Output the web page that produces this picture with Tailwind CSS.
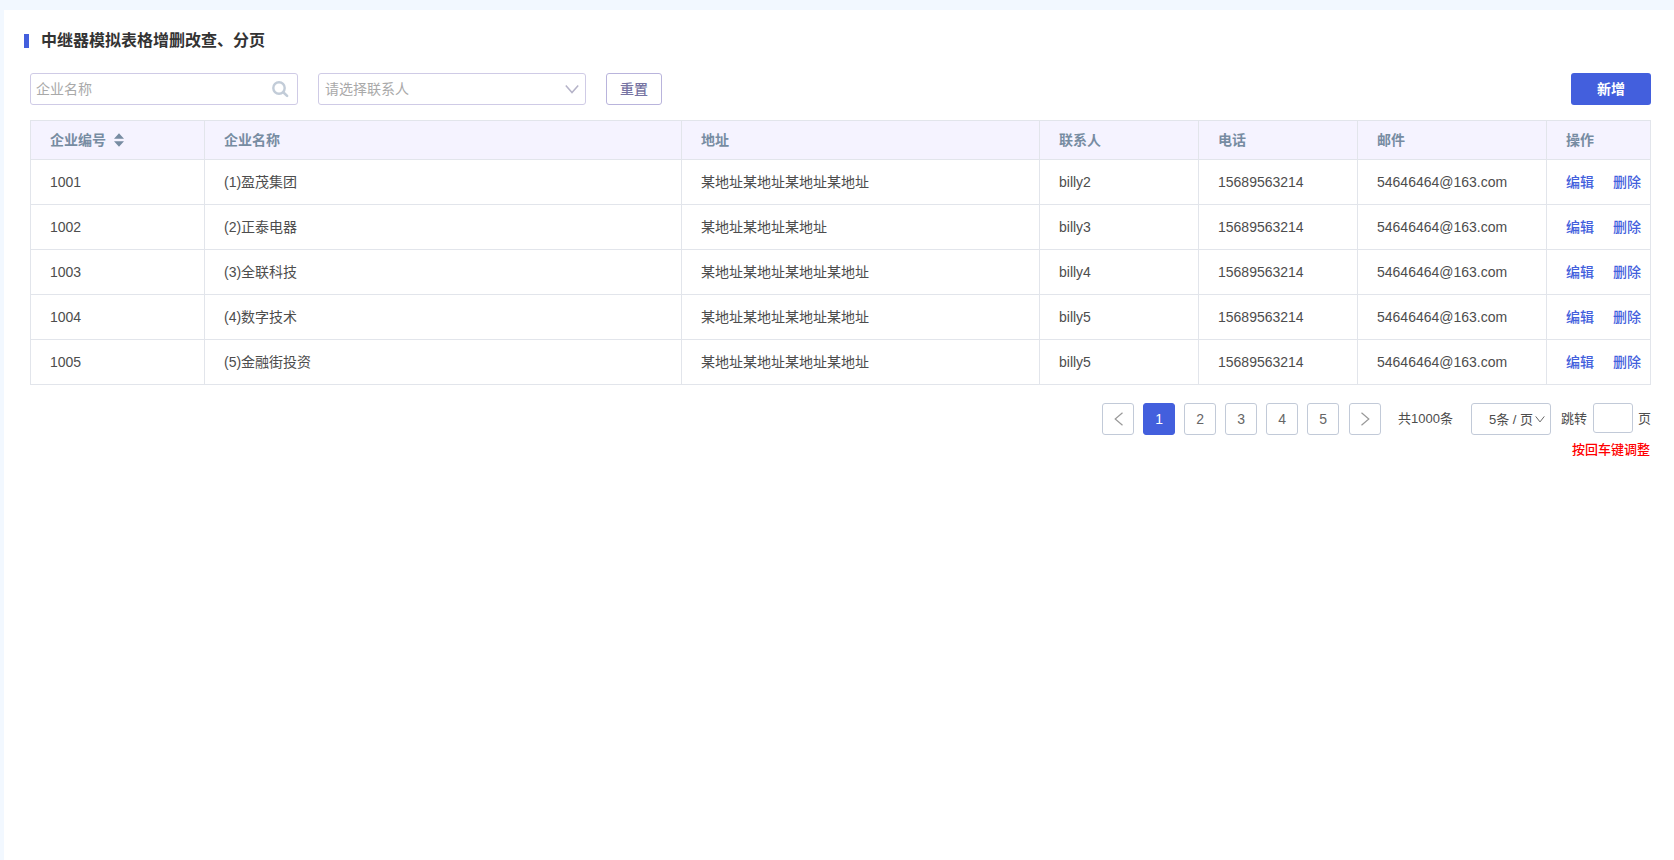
<!DOCTYPE html>
<html lang="zh-CN">
<head>
<meta charset="utf-8">
<meta name="viewport" content="width=device-width, initial-scale=1">
<title>中继器模拟表格增删改查、分页</title>
<script src="https://cdn.jsdelivr.net/npm/@tailwindcss/browser@4"></script>
</head>
<body class="flex min-h-screen flex-col bg-[#f2f8ff] pt-[10px] pl-1 font-['Liberation_Sans','Noto_Sans_CJK_SC',sans-serif] text-sm text-[#4d4d4d]">
<main class="flex-1 bg-white pt-[19px] pr-[23px] pl-[26px]">
  <header class="-ml-1.5 flex h-6 items-center gap-3">
    <span class="h-[14px] w-[5px] bg-[#435fdd]"></span>
    <h1 class="text-base leading-6 font-bold text-[#333]">中继器模拟表格增删改查、分页</h1>
  </header>

  <form class="mt-5 flex gap-5">
    <div class="relative w-[268px]">
      <input type="search" aria-label="企业名称" placeholder="企业名称" class="h-8 w-full rounded-[3px] border border-[#cfcbe6] bg-white pr-9 pl-[5px] text-sm outline-none placeholder:text-[#a9a9a9]">
      <svg class="pointer-events-none absolute top-2 right-[9px]" width="17" height="17" viewBox="0 0 17 17" fill="none" stroke="#c2ccd8" aria-hidden="true"><circle cx="7" cy="7" r="5.7" stroke-width="2.4"/><path d="M11.5 11.5l3.6 3.4" stroke-width="2.6" stroke-linecap="round"/></svg>
    </div>
    <div class="relative w-[268px]">
      <select aria-label="联系人" class="h-8 w-full appearance-none rounded-[3px] border border-[#cfcbe6] bg-white px-1.5 text-sm text-[#a9a9a9] outline-none">
        <option>请选择联系人</option>
      </select>
      <svg class="pointer-events-none absolute top-3 right-[7px]" width="14" height="9" viewBox="0 0 14 9" fill="none" stroke="#b5b3c8" stroke-width="1.5" aria-hidden="true"><path d="M.8.5L7 7.6 13.2.5"/></svg>
    </div>
    <button type="reset" class="h-8 w-14 rounded-[3px] border border-[#b9b4dc] bg-white font-medium text-[#7774a3]">重置</button>
    <button type="button" class="ml-auto h-8 w-20 rounded-[3px] bg-[#435fdd] font-bold text-white">新增</button>
  </form>

  <table class="mt-[15px] w-full table-fixed border-collapse text-left [&_td]:border [&_td]:border-[#e2e5eb] [&_td]:pl-[19px] [&_th]:border [&_th]:border-[#e2e5eb] [&_th]:pl-[19px]">
    <colgroup>
      <col class="w-[174px]"><col class="w-[477px]"><col><col class="w-[159px]"><col class="w-[159px]"><col class="w-[189px]"><col class="w-[104px]">
    </colgroup>
    <thead class="bg-[#f5f3ff] text-[#778ca2]">
      <tr class="h-[39px]">
        <th scope="col"><button type="button" class="flex items-center gap-2 font-bold">企业编号
          <svg width="10" height="14" viewBox="0 0 10 14" fill="currentColor" aria-hidden="true"><path d="M5 .2l5 5.6H0zM5 13.8L0 8.2h10z"/></svg></button></th>
        <th scope="col">企业名称</th><th scope="col">地址</th><th scope="col">联系人</th><th scope="col">电话</th><th scope="col">邮件</th><th scope="col">操作</th>
      </tr>
    </thead>
    <tbody>
      <tr class="h-[45px]"><td>1001</td><td>(1)盈茂集团</td><td>某地址某地址某地址某地址</td><td>billy2</td><td>15689563214</td><td>54646464@163.com</td><td><div class="flex gap-[19px] font-medium text-[#435fdd]"><a href="#">编辑</a><a href="#">删除</a></div></td></tr>
      <tr class="h-[45px]"><td>1002</td><td>(2)正泰电器</td><td>某地址某地址某地址</td><td>billy3</td><td>15689563214</td><td>54646464@163.com</td><td><div class="flex gap-[19px] font-medium text-[#435fdd]"><a href="#">编辑</a><a href="#">删除</a></div></td></tr>
      <tr class="h-[45px]"><td>1003</td><td>(3)全联科技</td><td>某地址某地址某地址某地址</td><td>billy4</td><td>15689563214</td><td>54646464@163.com</td><td><div class="flex gap-[19px] font-medium text-[#435fdd]"><a href="#">编辑</a><a href="#">删除</a></div></td></tr>
      <tr class="h-[45px]"><td>1004</td><td>(4)数字技术</td><td>某地址某地址某地址某地址</td><td>billy5</td><td>15689563214</td><td>54646464@163.com</td><td><div class="flex gap-[19px] font-medium text-[#435fdd]"><a href="#">编辑</a><a href="#">删除</a></div></td></tr>
      <tr class="h-[45px]"><td>1005</td><td>(5)金融街投资</td><td>某地址某地址某地址某地址</td><td>billy5</td><td>15689563214</td><td>54646464@163.com</td><td><div class="flex gap-[19px] font-medium text-[#435fdd]"><a href="#">编辑</a><a href="#">删除</a></div></td></tr>
    </tbody>
  </table>

  <div class="mt-[18px] flex items-start justify-end text-[13px] leading-8">
    <nav aria-label="分页" class="flex gap-[9px] text-sm [&_button]:flex [&_button]:size-8 [&_button]:items-center [&_button]:justify-center [&_button]:rounded-[3px] [&_button]:border [&_button]:border-[#c2cad8]">
      <button type="button" aria-label="上一页"><svg width="9" height="14" viewBox="0 0 9 14" fill="none" stroke="#999" stroke-width="1.2" aria-hidden="true"><path d="M8.5.8L1.2 7l7.3 6.2"/></svg></button>
      <button type="button" aria-current="page" class="border-[#435fdd]! bg-[#435fdd] text-white">1</button>
      <button type="button" class="text-[#666]">2</button>
      <button type="button" class="text-[#666]">3</button>
      <button type="button" class="text-[#666]">4</button>
      <button type="button" class="text-[#666]">5</button>
      <button type="button" aria-label="下一页" class="ml-px"><svg width="9" height="14" viewBox="0 0 9 14" fill="none" stroke="#999" stroke-width="1.2" aria-hidden="true"><path d="M.5.8L7.8 7 .5 13.2"/></svg></button>
    </nav>
    <span class="ml-[17px]">共1000条</span>
    <div class="relative ml-[18px] w-20">
      <select aria-label="每页条数" class="block h-8 w-full appearance-none rounded-[3px] border border-[#c2cad8] bg-white pl-[17px] outline-none">
        <option>5条 / 页</option>
      </select>
      <svg class="pointer-events-none absolute top-[13px] right-1.5" width="10" height="7" viewBox="0 0 10 7" fill="none" stroke="#666" stroke-width="1" aria-hidden="true"><path d="M.7.4L5 5.9 9.3.4"/></svg>
    </div>
    <label for="jump" class="ml-[10px]">跳转</label>
    <input id="jump" type="text" class="mr-[5px] ml-1.5 h-[30px] w-10 rounded-[3px] border border-[#c2cad8] bg-white px-2 outline-none">
    <span>页</span>
  </div>
  <p class="mt-[5px] pr-px text-right text-[13px] leading-5 font-medium text-[#ff0000]">按回车键调整</p>
</main>
</body>
</html>
